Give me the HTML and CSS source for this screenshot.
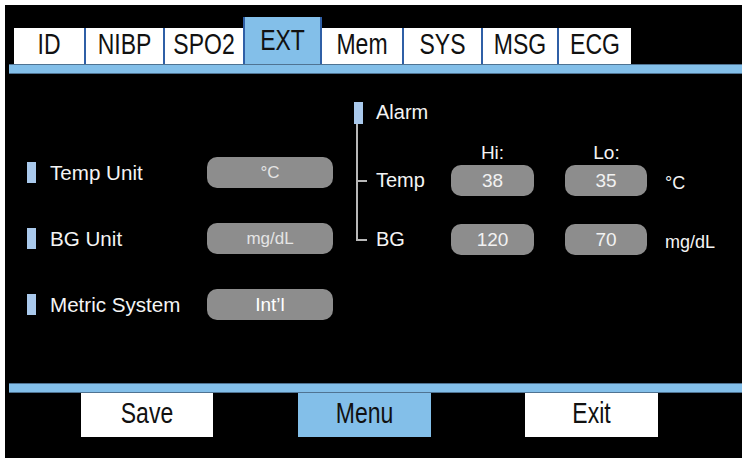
FILE: index.html
```html
<!DOCTYPE html>
<html lang="en">
<head>
    <meta charset="UTF-8">
    <meta name="viewport" content="width=device-width, initial-scale=1.0">
    <title>EXT Settings</title>
    <link rel="stylesheet" href="styles.css">
</head>
<body>

<div class="screen">
    <div class="tabs">
        <div class="tab tab-id"><span>ID</span></div>
        <div class="tab tab-nibp"><span>NIBP</span></div>
        <div class="tab tab-spo2"><span>SPO2</span></div>
        <div class="tab tab-ext active"><span>EXT</span></div>
        <div class="tab tab-mem"><span>Mem</span></div>
        <div class="tab tab-sys"><span>SYS</span></div>
        <div class="tab tab-msg"><span>MSG</span></div>
        <div class="tab tab-ecg"><span>ECG</span></div>
    </div>
    <div class="bar"></div>

    <div class="content">
        <div class="settings">
            <div class="row">
                <span class="mark"></span>
                <span class="label">Temp Unit</span>
                <span class="pill">°C</span>
            </div>
            <div class="row">
                <span class="mark"></span>
                <span class="label">BG Unit</span>
                <span class="pill">mg/dL</span>
            </div>
            <div class="row">
                <span class="mark"></span>
                <span class="label">Metric System</span>
                <span class="pill pill-bright">Int’l</span>
            </div>
        </div>

        <div class="alarm">
            <div class="alarm-head">
                <span class="mark"></span>
                <span class="label">Alarm</span>
            </div>
            <div class="tree">
                <div class="limits-head">
                    <span>Hi:</span>
                    <span>Lo:</span>
                </div>
                <div class="limit-row">
                    <span class="tick"></span>
                    <span class="name">Temp</span>
                    <span class="pill value hi">38</span>
                    <span class="pill value lo">35</span>
                    <span class="unit">°C</span>
                </div>
                <div class="limit-row">
                    <span class="tick"></span>
                    <span class="name">BG</span>
                    <span class="pill value hi">120</span>
                    <span class="pill value lo">70</span>
                    <span class="unit">mg/dL</span>
                </div>
            </div>
        </div>
    </div>

    <div class="bar"></div>
    <div class="actions">
        <div class="btn"><span>Save</span></div>
        <div class="btn active"><span>Menu</span></div>
        <div class="btn btn-exit"><span>Exit</span></div>
    </div>
</div>

</body>
</html>
```

FILE: styles.css
```css
body {
    margin: 0;
    background-color: #fff;
    font-family: "Liberation Sans", Arial, sans-serif;
}

.screen {
    margin: 5px 0 0 5px;
    width: 737px;
    height: 453px;
    background-color: #000;
    color: #f4f4f4;
}

/* top tabs */
.tabs {
    display: flex;
    align-items: flex-end;
    height: 59px;
    padding-left: 9px;
}

.tab {
    box-sizing: border-box;
    height: 36px;
    display: flex;
    align-items: center;
    justify-content: center;
    padding-bottom: 3px;
    background-color: #fff;
    color: #111;
    border-left: 2px solid #2f5fa6;
    font-size: 23px;
}

/* the panel font is tall and narrow */
.tab span,
.btn span {
    display: inline-block;
    transform: scaleY(1.28);
}

.tab.active {
    height: 47px;
    padding-bottom: 1px;
    background-color: #83bfe9;
    border-right: 2px solid #2f5fa6;
}

.tab.active + .tab {
    border-left: none;
}

.tab-id { width: 70px; border-left: none; }
.tab-nibp { width: 79px; }
.tab-spo2 { width: 80px; }
.tab-ext { width: 79px; }
.tab-mem { width: 80px; }
.tab-sys { width: 79px; }
.tab-msg { width: 76px; }
.tab-ecg { width: 74px; }

.bar {
    box-sizing: border-box;
    height: 10px;
    margin-left: 4px;
    background-color: #83bfe9;
    border-top: 1px solid #4f7392;
    border-bottom: 1px solid #4f7392;
}

/* middle area */
.content {
    display: flex;
    height: 309px;
}

.settings {
    box-sizing: border-box;
    width: 328px;
    padding: 83px 0 0 22px;
    display: flex;
    flex-direction: column;
    gap: 35px;
}

.row {
    display: flex;
    align-items: center;
    height: 31px;
}

.mark {
    width: 9px;
    height: 21px;
    background-color: #a9c9ec;
}

.label {
    font-size: 20px;
}

.row .label {
    width: 157px;
    margin-left: 14px;
    font-size: 20.6px;
}

.pill {
    display: flex;
    align-items: center;
    justify-content: center;
    width: 126px;
    height: 31px;
    border-radius: 10px;
    background-color: #8d8d8d;
    color: #e4e4e4;
    font-size: 17px;
}

.pill-bright {
    color: #fff;
    font-size: 19px;
}

.alarm {
    margin-left: 20px;
    padding-top: 27px;
}

.alarm-head {
    display: flex;
    align-items: center;
}

.alarm-head .mark {
    width: 9px;
    height: 22px;
    margin-left: 1px;
}

.alarm-head .label {
    margin-left: 13px;
}

.tree {
    margin-left: 3px;
    padding-top: 18px;
    background: linear-gradient(#b8b8b8, #b8b8b8) no-repeat left top / 2px calc(100% - 14px);
}

.limits-head {
    display: flex;
    gap: 31px;
    padding-left: 95px;
    margin-bottom: 1px;
    font-size: 19px;
    line-height: 22px;
}

.limits-head span {
    width: 83px;
    text-align: center;
}

.limit-row {
    display: flex;
    align-items: center;
    height: 31px;
}

.limit-row + .limit-row {
    margin-top: 28px;
}

.tick {
    width: 11px;
    height: 2px;
    background-color: #b8b8b8;
}

.name {
    width: 75px;
    margin-left: 9px;
    font-size: 20px;
}

.pill.value {
    width: 83px;
    color: #f2f2f2;
    font-size: 19px;
}

.pill.lo {
    width: 82px;
    margin-left: 31px;
}

.unit {
    align-self: flex-end;
    margin: 0 0 3px 18px;
    font-size: 18px;
    line-height: 20px;
}

/* bottom buttons */
.actions {
    display: flex;
    gap: 85px;
    padding-left: 76px;
}

.btn {
    box-sizing: border-box;
    width: 132px;
    height: 44px;
    display: flex;
    align-items: center;
    justify-content: center;
    padding-bottom: 4px;
    background-color: #fff;
    color: #111;
    font-size: 23px;
}

.btn.active {
    width: 133px;
    background-color: #83bfe9;
}

.btn-exit {
    width: 133px;
    margin-left: 9px;
}
```
